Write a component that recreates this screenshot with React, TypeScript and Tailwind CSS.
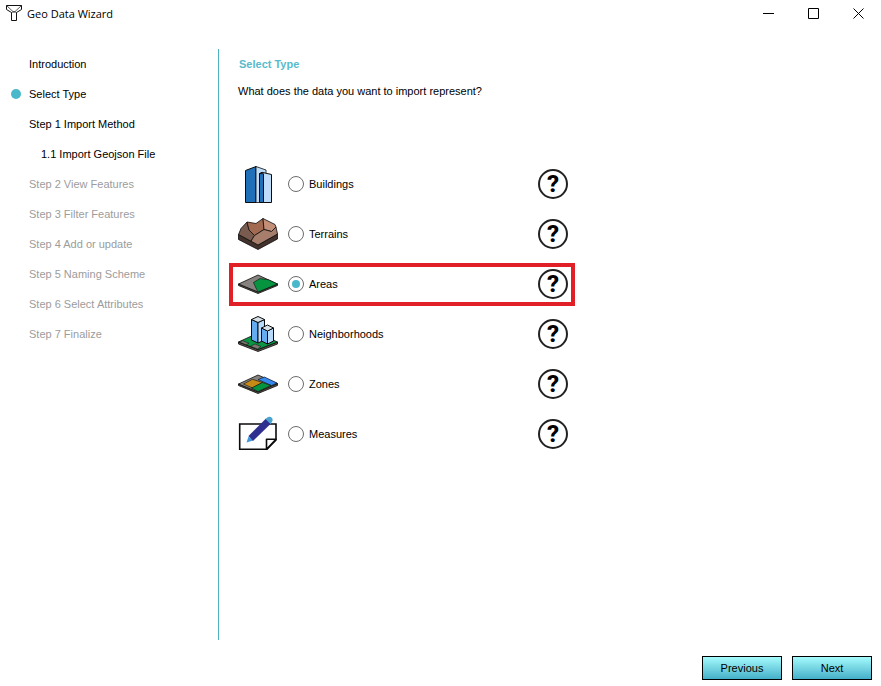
import { useState, type ReactNode } from 'react'

interface Step {
  label: string
  sub?: boolean
  disabled?: boolean
}

interface DataType {
  id: string
  label: string
  icon: ReactNode
}

const CURRENT_STEP = 'Select Type'

const STEPS: Step[] = [
  { label: 'Introduction' },
  { label: 'Select Type' },
  { label: 'Step 1 Import Method' },
  { label: '1.1 Import Geojson File', sub: true },
  { label: 'Step 2 View Features', disabled: true },
  { label: 'Step 3 Filter Features', disabled: true },
  { label: 'Step 4 Add or update', disabled: true },
  { label: 'Step 5 Naming Scheme', disabled: true },
  { label: 'Step 6 Select Attributes', disabled: true },
  { label: 'Step 7 Finalize', disabled: true },
]

function TypeIcon({ children }: { children: ReactNode }) {
  return (
    <svg viewBox="0 0 40 40" className="w-10 h-10 shrink-0" stroke="#0b0b0b" strokeLinejoin="round" aria-hidden="true">
      {children}
    </svg>
  )
}

const TYPES: DataType[] = [
  {
    id: 'buildings',
    label: 'Buildings',
    icon: (
      <TypeIcon>
        <path d="M7.5 6.5 18 2.5V38.5H7.5Z" fill="#1f70b8" />
        <path d="M18 2.5 28 6V38.5H18Z" fill="#bddcfa" strokeWidth=".8" />
        <path d="M21.5 9.5H25.5V38.5H21.5Z" fill="#1f6fb8" />
        <path d="M21.5 9.5 24 8.3 33.5 10.5V38.5H25.5V9.8Z" fill="#bddcfa" />
      </TypeIcon>
    ),
  },
  {
    id: 'terrains',
    label: 'Terrains',
    icon: (
      <TypeIcon>
        <g strokeWidth=".8">
          <path d="M.5 20.5 20 31 39.5 20V25L20 35.5.5 25.5Z" fill="#43312c" />
          <path d="M.5 20.5 3 14.500 9 8 11 15.5 16.5 21.5 13 27.2Z" fill="#7a5b4f" />
          <path d="M9 8 18 9.5 25 4.5 26 15.5 16.5 21.5 11 16Z" fill="#a36a52" />
          <path d="M25 4.500 37 10.500 38 13 33.500 17.500 26 15.500Z" fill="#c48f79" />
          <path d="M13 27.200 16.500 21.500 26 15.500 33.500 17.500 38 13 39.500 20 20 31Z" fill="#a77d6b" />
        </g>
      </TypeIcon>
    ),
  },
  {
    id: 'areas',
    label: 'Areas',
    icon: (
      <TypeIcon>
        <path d="M.5 20 20 27.5 39.5 20V21.5L20 29.5.5 21.5Z" fill="#5c534b" strokeWidth=".8" />
        <path d="M.5 20 20 11 39.5 20 20 28Z" fill="#85827f" strokeWidth=".8" />
        <path d="M15.5 18.5 22 14.5 30.5 15.8 39.5 20 20 28 17.5 23Z" fill="#079440" strokeWidth=".6" />
      </TypeIcon>
    ),
  },
  {
    id: 'neighborhoods',
    label: 'Neighborhoods',
    icon: (
      <TypeIcon>
        <path d="M.5 28 20 35.5 39.5 28V30L20 37.5.5 30Z" fill="#5c534b" strokeWidth=".8" />
        <path d="M.5 28 20 19 39.5 28 20 35.5Z" fill="#0b9443" strokeWidth=".8" />
        <path d="M1.5 28 4.5 26.7 11 29.3 8 30.7ZM12.5 32.3 17 30 23 32.5 19.5 35Z" fill="#7f7975" strokeWidth=".5" />
        <path d="M13.5 5.5 20 8.5V29L13.5 26Z" fill="#64abf0" />
        <path d="M20 8.5 26.5 5.5V26L20 29Z" fill="#b7dafa" />
        <path d="M13.5 5.5 20 2.5 26.5 5.5 20 8.5Z" fill="#d7e0e6" />
        <path d="M23.5 14 29.5 17V30L23.5 27Z" fill="#64abf0" />
        <path d="M29.5 17 35.5 14V27L29.5 30Z" fill="#b7dafa" />
        <path d="M23.5 14 29.5 11 35.5 14 29.5 17Z" fill="#d7e0e6" />
      </TypeIcon>
    ),
  },
  {
    id: 'zones',
    label: 'Zones',
    icon: (
      <TypeIcon>
        <path d="M.5 20 20 27.5 39.5 19.5V21.5L20 29.5.5 21.5Z" fill="#5c534b" strokeWidth=".8" />
        <path d="M.5 20 20 11 39.5 19.5 20 28Z" fill="#85827f" strokeWidth=".8" />
        <path d="M5.5 20 14.5 15.3 24.5 18.5 14.5 24Z" fill="#c78a16" strokeWidth=".6" />
        <path d="M20 15.5 26.5 13 39 19 33.5 21.5Z" fill="#3389f0" strokeWidth=".6" />
        <path d="M13.5 24 24.5 18.5 33 21.5 20 27.5Z" fill="#079440" strokeWidth=".6" />
      </TypeIcon>
    ),
  },
  {
    id: 'measures',
    label: 'Measures',
    icon: (
      <TypeIcon>
        <path d="M1.7 10H38V26L29 35.3H1.7Z" fill="#fff" strokeWidth="1.6" strokeLinejoin="miter" />
        <path d="M38 25.3H28.5V35.3Z" fill="#fff" strokeWidth="1.6" />
        <path d="M8.5 28.5 10.5 22.5 15 26.5Z" fill="#3e97d8" stroke="none" />
        <path d="M10.5 22 28 4.5 33 9.5 15 27Z" fill="#2f2f8f" stroke="none" />
        <path d="M27.5 5 30 3Q32.5 2 34 4T33.5 8.5L32.5 10Z" fill="#4ba3cf" stroke="none" />
      </TypeIcon>
    ),
  },
]

function TitleBar() {
  return (
    <header className="flex h-[27px] items-center justify-between">
      <div className="flex items-center gap-1 pl-1.5">
        <svg viewBox="0 0 17 17" className="w-[17px] h-[17px]" fill="none" stroke="#111" aria-hidden="true">
          <path d="M.5.5H15.5V4.5L10.5 7.5V15.5H5.5V7.5L.5 4.5Z" />
          <path d="M.5.5 8 7.5 15.5.5M5.5 7.5 8 6.5 10.5 7.5" strokeWidth=".7" />
        </svg>
        <h1 className="font-['Open_Sans',sans-serif] text-[11px] leading-4">Geo Data Wizard</h1>
      </div>
      <div className="flex">
        <button aria-label="Minimize" className="flex h-[27px] w-[45px] items-center justify-center hover:bg-gray-200">
          <svg viewBox="0 0 11 11" className="w-[11px] h-[11px]" stroke="#000"><path d="M0 5.5H11" /></svg>
        </button>
        <button aria-label="Maximize" className="flex h-[27px] w-[45px] items-center justify-center hover:bg-gray-200">
          <svg viewBox="0 0 11 11" className="w-[11px] h-[11px]" stroke="#000" fill="none"><path d="M.5.5H10.5V10.5H.5Z" /></svg>
        </button>
        <button aria-label="Close" className="flex h-[27px] w-[45px] items-center justify-center hover:bg-red-500">
          <svg viewBox="0 0 11 11" className="w-[11px] h-[11px]" stroke="#000"><path d="M.5.5 10.5 10.5M10.5.5.5 10.5" /></svg>
        </button>
      </div>
    </header>
  )
}

function StepList() {
  return (
    <nav className="w-[218px] shrink-0">
      <ol>
        {STEPS.map(step => (
          <li key={step.label} className={`flex h-[30px] items-center gap-2 pl-[11px] ${step.disabled ? 'text-[#9c9c9c]' : ''}`}>
            <span className={`h-2.5 w-2.5 shrink-0 rounded-full ${step.label === CURRENT_STEP ? 'bg-[#4ab8cb]' : ''}`} />
            <span className={step.sub ? 'pl-3' : ''}>{step.label}</span>
          </li>
        ))}
      </ol>
    </nav>
  )
}

export default function App() {
  const [selected, setSelected] = useState('areas')

  return (
    <div className="flex min-h-screen flex-col bg-white font-['Liberation_Sans',Arial,sans-serif] text-[11px] leading-4 text-black">
      <TitleBar />

      <div className="flex flex-1 pt-[22px]">
        <StepList />

        <main className="flex-1 border-l border-[#4fb0c2] pl-2.5">
          <h2 className="flex h-[30px] items-center pl-2.5 font-bold text-[#58bbcb]">Select Type</h2>
          <p className="pt-1 pl-[9px]">What does the data you want to import represent?</p>

          <div role="radiogroup" aria-label="Data type" className="max-w-[346px] pt-[60px]">
            {TYPES.map(type => (
              <div key={type.id} className="flex h-[50px] items-center">
                <div className={`flex h-[43px] flex-1 items-center border-4 pr-[3px] pl-[5px] ${selected === type.id ? 'border-[#e01f27]' : 'border-transparent'}`}>
                  <label className="flex flex-1 items-center">
                    {type.icon}
                    <input
                      type="radio"
                      name="type"
                      checked={selected === type.id}
                      onChange={() => setSelected(type.id)}
                      className="mr-[5px] ml-2.5 grid h-4 w-4 shrink-0 appearance-none place-content-center rounded-full border border-[#6b6b6b] bg-white checked:before:h-2 checked:before:w-2 checked:before:rounded-full checked:before:bg-[#4ab8cb]"
                    />
                    {type.label}
                  </label>
                  <button
                    aria-label={`Help about ${type.label}`}
                    className="flex h-[30px] w-[30px] items-center justify-center rounded-full border-2 border-[#222] bg-white font-['Roboto',sans-serif] text-2xl leading-none font-extrabold"
                  >
                    ?
                  </button>
                </div>
              </div>
            ))}
          </div>
        </main>
      </div>

      <footer className="flex justify-end gap-2.5 pt-4 pr-[9px] pb-1.5">
        <button className="h-6 w-20 border border-black bg-linear-to-b from-[#a4fbfc] to-[#43b0c9]">Previous</button>
        <button className="h-6 w-20 border border-black bg-linear-to-b from-[#a4fbfc] to-[#43b0c9]">Next</button>
      </footer>
    </div>
  )
}
